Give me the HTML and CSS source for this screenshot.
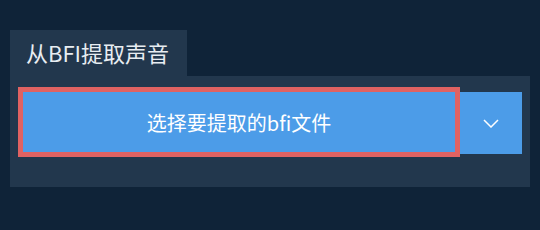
FILE: index.html
```html
<!DOCTYPE html>
<html lang="zh">
<head>
    <meta charset="UTF-8">
    <title>从BFI提取声音</title>
    <link rel="stylesheet" href="styles.css">
</head>
<body>
    <div class="wrap">
        <div class="tab">从BFI提取声音</div>
        <div class="panel">
            <button class="button_pick">选择要提取的bfi文件</button>
            <button class="button_drop">
                <svg width="16" height="9" viewBox="0 0 16 9">
                    <path d="M1 1 L8 8 L15 1" fill="none" stroke="#ffffff" stroke-width="1.5"/>
                </svg>
            </button>
        </div>
    </div>
</body>
</html>
```

FILE: styles.css
```css
/*page*/
body{
    margin: 0;
    background-color: #0f2338;
    font-family: "Noto Sans CJK SC", "Noto Sans", sans-serif;
}
.wrap{
    padding: 30px 10px;
}
.tab{
    display: inline-block;
    width: 177px;
    height: 46px;
    box-sizing: border-box;
    padding-left: 16px;
    line-height: 45px;
    font-size: 22px;
    color: #e8edf2;
    background-color: #22374d;
}
.panel{
    display: flex;
    align-items: flex-start;
    padding: 11px 8px 30px 8px;
    background-color: #22374d;
}
.button_pick{
    flex: 1;
    height: 70px;
    border: 5px solid #e06262;
    background-color: #4c9ce8;
    color: #ffffff;
    font-family: inherit;
    font-size: 20px;
    padding: 0;
}
.button_drop{
    width: 62px;
    height: 62px;
    margin-top: 5px;
    border: none;
    padding: 0;
    background-color: #4c9ce8;
    display: flex;
    justify-content: center;
    align-items: center;
}
```
